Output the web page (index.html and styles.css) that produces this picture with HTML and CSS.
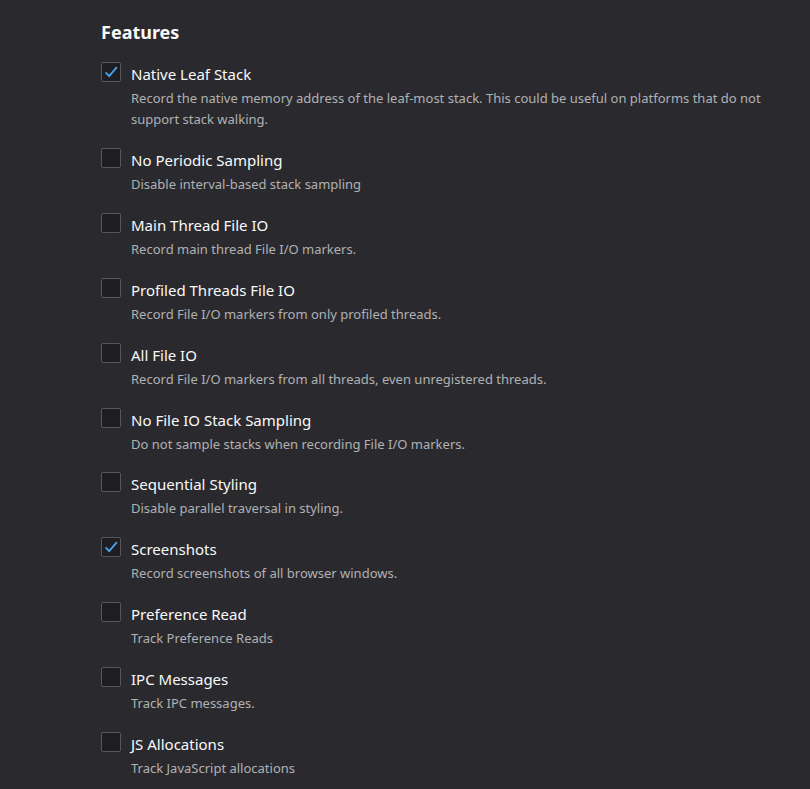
FILE: index.html
```html
<!DOCTYPE html>
<html lang="en">
<head>
    <meta charset="UTF-8">
    <title>Features</title>
    <link rel="stylesheet" href="styles.css">
</head>
<body>
    <div class="features">
        <h2>Features</h2>

        <label class="feature">
            <span class="box checked">
                <svg viewBox="0 0 20 20"><path d="M4 10.5 L8 14.5 L16.5 4.5"/></svg>
            </span>
            <div class="text">
                <div class="name">Native Leaf Stack</div>
                <div class="desc">Record the native memory address of the leaf-most stack. This could be useful on platforms that do not support stack walking.</div>
            </div>
        </label>

        <label class="feature">
            <span class="box"></span>
            <div class="text">
                <div class="name">No Periodic Sampling</div>
                <div class="desc">Disable interval-based stack sampling</div>
            </div>
        </label>

        <label class="feature">
            <span class="box"></span>
            <div class="text">
                <div class="name">Main Thread File IO</div>
                <div class="desc">Record main thread File I/O markers.</div>
            </div>
        </label>

        <label class="feature">
            <span class="box"></span>
            <div class="text">
                <div class="name">Profiled Threads File IO</div>
                <div class="desc">Record File I/O markers from only profiled threads.</div>
            </div>
        </label>

        <label class="feature">
            <span class="box"></span>
            <div class="text">
                <div class="name">All File IO</div>
                <div class="desc">Record File I/O markers from all threads, even unregistered threads.</div>
            </div>
        </label>

        <label class="feature">
            <span class="box"></span>
            <div class="text">
                <div class="name">No File IO Stack Sampling</div>
                <div class="desc">Do not sample stacks when recording File I/O markers.</div>
            </div>
        </label>

        <label class="feature">
            <span class="box"></span>
            <div class="text">
                <div class="name">Sequential Styling</div>
                <div class="desc">Disable parallel traversal in styling.</div>
            </div>
        </label>

        <label class="feature">
            <span class="box checked">
                <svg viewBox="0 0 20 20"><path d="M4 10.5 L8 14.5 L16.5 4.5"/></svg>
            </span>
            <div class="text">
                <div class="name">Screenshots</div>
                <div class="desc">Record screenshots of all browser windows.</div>
            </div>
        </label>

        <label class="feature">
            <span class="box"></span>
            <div class="text">
                <div class="name">Preference Read</div>
                <div class="desc">Track Preference Reads</div>
            </div>
        </label>

        <label class="feature">
            <span class="box"></span>
            <div class="text">
                <div class="name">IPC Messages</div>
                <div class="desc">Track IPC messages.</div>
            </div>
        </label>

        <label class="feature">
            <span class="box"></span>
            <div class="text">
                <div class="name">JS Allocations</div>
                <div class="desc">Track JavaScript allocations</div>
            </div>
        </label>
    </div>
</body>
</html>
```

FILE: styles.css
```css
body, html {
    margin: 0;
    padding: 0;
    background-color: #2a2a2e;
    font-family: 'Noto Sans', 'Open Sans', sans-serif;
    color: #f9f9fa;
}

.features {
    padding: 20px 40px 20px 101px;
}

.features h2 {
    margin: 0 0 18px 0;
    font-size: 18px;
    line-height: 24px;
    font-weight: 700;
    color: #f9f9fa;
}

.feature {
    display: flex;
    gap: 10px;
    margin-bottom: 17.92px;
}

.box {
    flex: none;
    width: 18px;
    height: 18px;
    border: 1px solid #56565c;
    border-radius: 2px;
    background: #1e1e22;
    display: flex;
}

.box svg {
    width: 18px;
    height: 18px;
    fill: none;
    stroke: #4aa3ea;
    stroke-width: 2;
}

.text {
    flex: 1;
}

.name {
    font-size: 15px;
    line-height: 24px;
    color: #f9f9fa;
}

.desc {
    margin-top: 2px;
    font-size: 13px;
    line-height: 21px;
    color: #b1b1b3;
}
```
